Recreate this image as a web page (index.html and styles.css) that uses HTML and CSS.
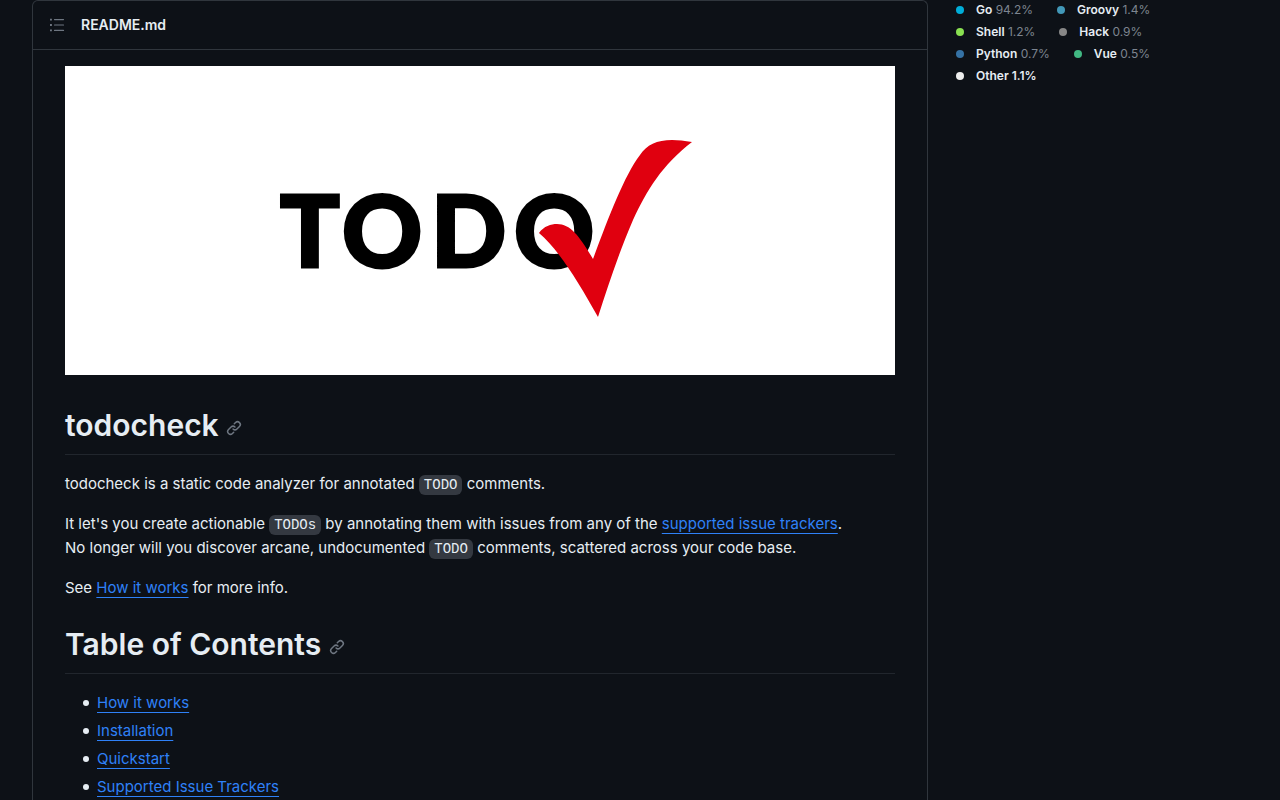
FILE: index.html
```html
<!DOCTYPE html>
<html lang="en">
<head>
<meta charset="utf-8">
<title>todocheck README</title>
<meta name="viewport" content="width=device-width, initial-scale=1">
<link rel="stylesheet" href="styles.css">
</head>
<body>
<svg class="sprite" aria-hidden="true">
  <symbol id="link" viewBox="0 0 16 16"><path d="m7.775 3.275 1.25-1.25a3.5 3.5 0 1 1 4.95 4.95l-2.5 2.5a3.5 3.5 0 0 1-4.95 0 .751.751 0 0 1 .018-1.042.751.751 0 0 1 1.042-.018 1.998 1.998 0 0 0 2.83 0l2.5-2.5a2.002 2.002 0 0 0-2.83-2.83l-1.25 1.25a.751.751 0 0 1-1.042-.018.751.751 0 0 1-.018-1.042Zm-4.69 9.64a1.998 1.998 0 0 0 2.83 0l1.25-1.25a.751.751 0 0 1 1.042.018.751.751 0 0 1 .018 1.042l-1.25 1.25a3.5 3.5 0 1 1-4.95-4.95l2.5-2.5a3.5 3.5 0 0 1 4.95 0 .751.751 0 0 1-.018 1.042.751.751 0 0 1-1.042.018 1.998 1.998 0 0 0-2.83 0l-2.5 2.5a1.998 1.998 0 0 0 0 2.83Z"/></symbol>
</svg>
<div class="page">
  <main class="readme">
    <header class="readme-header">
      <button class="outline-button" type="button" aria-label="Outline">
        <svg viewBox="0 0 16 16" width="16" height="16"><path d="M5.5 2.6h9M5.5 8h9M5.5 13.4h9" stroke="currentColor" stroke-width="1.2" stroke-linecap="round"/><path d="M1 1.7h1.9v1.9H1zM1 7.1h1.9V9H1zM1 12.4h1.9v1.9H1z" fill="currentColor"/></svg>
      </button>
      <h2 class="file-name">README.md</h2>
    </header>
    <article class="content">
      <svg class="banner" viewBox="0 0 830 309" role="img" aria-label="TODO check">
        <rect width="830" height="309" fill="#fff"/>
        <text class="wordmark" y="201" x="215 277 366 449">TODO</text>
        <path class="tick" d="M474 167C479 160 486 158 492 158C506 158 515 171 528 193C543 153 559 110 575 89C584 75 600 71 627 76C597 99 582 124 568 154C553 189 543 220 533 251C514 217 494 184 474 167Z"/>
      </svg>
      <h1 class="heading">todocheck <a class="anchor" href="#todocheck" aria-label="Link to todocheck"><svg width="16" height="16"><use href="#link"/></svg></a></h1>
      <p>todocheck is a static code analyzer for annotated <code>TODO</code> comments.</p>
      <p>It let's you create actionable <code>TODOs</code> by annotating them with issues from any of the <a href="#trackers">supported issue trackers</a>.<br>No longer will you discover arcane, undocumented <code>TODO</code> comments, scattered across your code base.</p>
      <p>See <a href="#how">How it works</a> for more info.</p>
      <h1 class="heading">Table of Contents <a class="anchor" href="#contents" aria-label="Link to Table of Contents"><svg width="16" height="16"><use href="#link"/></svg></a></h1>
      <ul class="toc">
        <li><a href="#how">How it works</a></li>
        <li><a href="#installation">Installation</a></li>
        <li><a href="#quickstart">Quickstart</a></li>
        <li><a href="#trackers">Supported Issue Trackers</a></li>
      </ul>
    </article>
  </main>
  <aside class="sidebar">
    <ul class="languages">
      <li class="go"><a href="#go"><b>Go</b> <span>94.2%</span></a></li>
      <li class="groovy"><a href="#groovy"><b>Groovy</b> <span>1.4%</span></a></li>
      <li class="shell"><a href="#shell"><b>Shell</b> <span>1.2%</span></a></li>
      <li class="hack"><a href="#hack"><b>Hack</b> <span>0.9%</span></a></li>
      <li class="python"><a href="#python"><b>Python</b> <span>0.7%</span></a></li>
      <li class="vue"><a href="#vue"><b>Vue</b> <span>0.5%</span></a></li>
      <li class="other"><b>Other 1.1%</b></li>
    </ul>
  </aside>
</div>
</body>
</html>
```
FILE: styles.css
```css
* { box-sizing: border-box; }

body {
  margin: 0;
  background: #0d1117;
  color: #e6edf3;
  font: 15px/24px Inter, "Liberation Sans", sans-serif;
}

.sprite { display: none; }

.page {
  display: grid;
  grid-template-columns: minmax(0, 1fr) 296px;
  gap: 24px;
  padding: 0 32px;
  height: 100vh;
  overflow: hidden;
}

.readme {
  border: 1px solid #30363d;
  border-bottom: 0;
  border-radius: 6px 6px 0 0;
}

.readme-header {
  display: flex;
  align-items: center;
  gap: 16px;
  height: 49px;
  padding: 0 16px;
  border-bottom: 1px solid #30363d;
}

.outline-button {
  display: flex;
  padding: 0;
  border: 0;
  background: none;
  color: #6e7681;
}

.file-name {
  margin: 0;
  font-size: 14px;
  font-weight: 600;
}

.content { padding: 16px 32px; }

.banner {
  display: block;
  width: 100%;
}

.wordmark {
  font: 900 99px Lato, sans-serif;
  fill: #000;
  stroke: #000;
  stroke-width: 3px;
}

.tick { fill: #e0000f; }

.heading {
  margin: 24px 0 17px;
  padding-bottom: 9px;
  border-bottom: 1px solid #21262d;
  font-size: 30px;
  font-weight: 600;
  line-height: 40px;
}

.banner + .heading { margin-top: 30px; }

.anchor { color: #6e7681; }
.anchor svg { fill: currentColor; }

p { margin: 0 0 16px; }

.content p a,
.toc a {
  color: #2f81f7;
  text-decoration: underline 1px;
  text-underline-offset: 4px;
  text-decoration-skip-ink: none;
}

code {
  padding: 2px 5px;
  border-radius: 6px;
  background: #343941;
  font: 14px/16px "Liberation Mono", monospace;
}

.toc {
  margin: 0;
  padding-left: 18px;
  list-style: none;
}

.toc li {
  display: flex;
  align-items: center;
  gap: 8px;
}

.toc li::before {
  content: "";
  width: 6px;
  height: 6px;
  border-radius: 50%;
  background: currentColor;
}

.toc li + li { margin-top: 4px; }

.languages {
  display: flex;
  flex-wrap: wrap;
  column-gap: 20px;
  max-width: 230px;
  margin: 0;
  padding: 1px 0 0;
  list-style: none;
  font-size: 12px;
  line-height: 18px;
}

.languages li {
  display: flex;
  align-items: center;
  gap: 12px;
  padding: 0 0 4px 4px;
}

.languages li::before {
  content: "";
  width: 8px;
  height: 8px;
  border-radius: 50%;
  background: currentColor;
}

.languages a { text-decoration: none; }
.languages b { color: #e6edf3; font-weight: 600; }
.languages span { color: #7d8590; }

.go { color: #00add8; }
.groovy { color: #4298b8; }
.shell { color: #89e051; }
.hack { color: #878787; }
.python { color: #3572a5; }
.vue { color: #41b883; }
.other { color: #ededed; }
```
